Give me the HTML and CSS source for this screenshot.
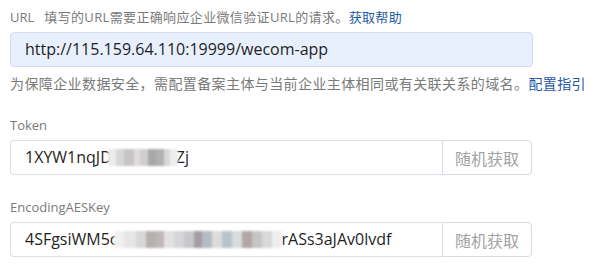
FILE: index.html
```html
<!DOCTYPE html>
<html lang="zh-CN">
<head>
<meta charset="utf-8">
<title>企业微信回调配置</title>
<link rel="stylesheet" href="styles.css">
</head>
<body>
<div class="form">
  <div class="label first"><span class="key">URL</span><span class="desc">填写的URL需要正确响应企业微信验证URL的请求。<a class="link">获取帮助</a></span></div>
  <div class="input url">http://115.159.64.110:19999/wecom-app</div>
  <div class="hint">为保障企业数据安全，需配置备案主体与当前企业主体相同或有关联关系的域名。<a class="link">配置指引</a></div>

  <div class="label second">Token</div>
  <div class="group">
    <div class="input joined">1XYW1nqJD<span class="blur b1"></span>Zj</div>
    <button class="btn">随机获取</button>
  </div>

  <div class="label third">EncodingAESKey</div>
  <div class="group">
    <div class="input joined">4SFgsiWM5c<span class="blur b2"></span>rASs3aJAv0lvdf</div>
    <button class="btn">随机获取</button>
  </div>
</div>
</body>
</html>
```
FILE: styles.css
```css
html, body {
  margin: 0;
  padding: 0;
  background: #ffffff;
}
body {
  font-family: "Open Sans", "Noto Sans CJK SC", sans-serif;
  width: 597px;
  height: 267px;
  overflow: hidden;
}
.form {
  padding-left: 10px;
  width: 600px;
}
.label {
  font-size: 13px;
  line-height: 20px;
  color: #7a7a7a;
  white-space: nowrap;
}
.label.first { padding-top: 7px; }
.label.second { margin-top: 21px; }
.label.third { margin-top: 22px; }
.key { margin-right: 10px; }
.desc { letter-spacing: 0.35px; }
.link {
  color: #1f5aa6;
  cursor: pointer;
}
.input {
  box-sizing: border-box;
  height: 35px;
  margin-top: 5px;
  border: 1px solid #dcdfe6;
  border-radius: 4px;
  padding-left: 14px;
  font-size: 16px;
  line-height: 33px;
  color: #1f1f1f;
  white-space: nowrap;
  overflow: hidden;
}
.input.url {
  width: 523px;
  background: #e8f0fe;
  border-color: #d3dcec;
}
.hint {
  margin-top: 7px;
  font-size: 14px;
  line-height: 20px;
  letter-spacing: 0.4px;
  color: #7a7a7a;
  white-space: nowrap;
}
.group {
  display: flex;
  width: 522px;
  margin-top: 5px;
}
.group .input {
  margin-top: 0;
  flex: 1;
  border-radius: 4px 0 0 4px;
  border-right: none;
}
.btn {
  box-sizing: border-box;
  width: 90px;
  height: 35px;
  border: 1px solid #d6dae2;
  border-radius: 0 4px 4px 0;
  background: #ffffff;
  color: #a3a3a3;
  font-family: "Noto Sans CJK SC", sans-serif;
  font-size: 16px;
  padding: 0;
}
.blur {
  display: inline-block;
  height: 17px;
  vertical-align: -3px;
  filter: blur(1px);
}
.b1 {
  width: 70px;
  margin-left: -4px;
  margin-right: -2px;
  background: linear-gradient(90deg,
    #ececec 0 8px, #d6d6d6 8px 16px, #c8c4c4 16px 26px, #e0dcdc 26px 32px,
    #cfcfcf 32px 40px, #a8a8a8 40px 48px, #b4b0b0 48px 56px, #d8d8d8 56px 62px, #eeeeee 62px 70px);
}
.b2 {
  width: 168px;
  margin-left: -4px;
  background: linear-gradient(90deg,
    #f0f0f0 0 10px, #e6e6e6 10px 22px, #d8d8d8 22px 32px, #b8b0b0 32px 42px, #c0b8b8 42px 50px, #e2e2e2 50px 60px,
    #d6d6d6 60px 70px, #c8c8cc 70px 80px, #a49ea4 80px 88px, #b4bcc4 88px 98px, #dcdcdc 98px 108px,
    #b8c4cc 108px 118px, #d8dcdc 118px 128px, #b0a8a8 128px 138px, #c8c4c4 138px 148px, #d8d8d8 148px 158px, #eeeeee 158px 168px);
}
```
